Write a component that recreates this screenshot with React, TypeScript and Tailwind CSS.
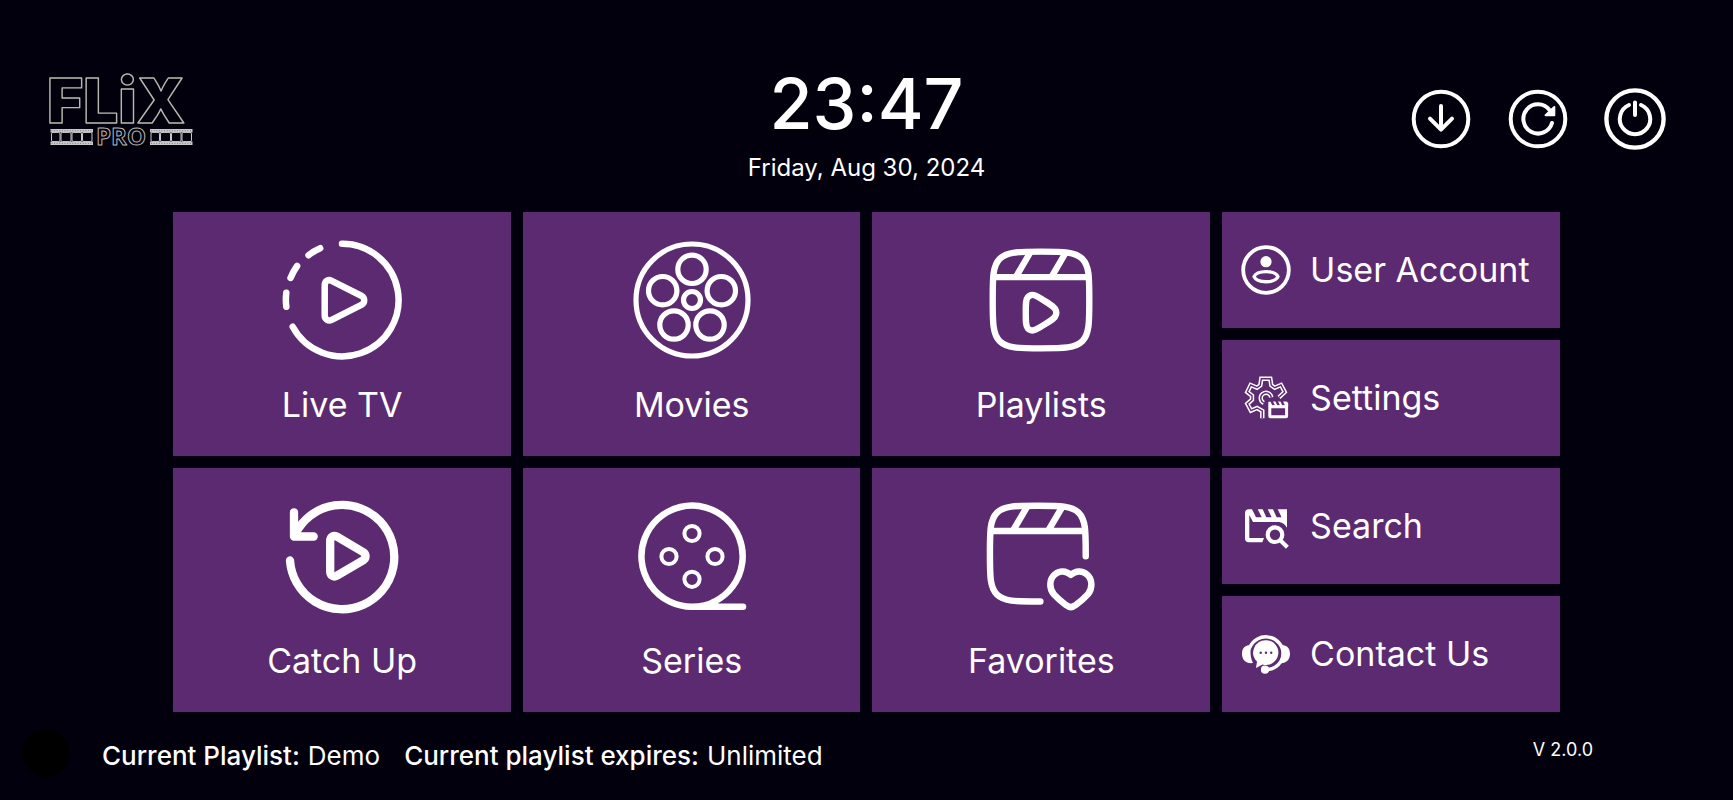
import type { ReactNode } from "react";

interface IconProps {
  children: ReactNode;
  viewBox?: string;
  className: string;
  strokeWidth?: number;
}

function Icon({ children, viewBox = "0 0 120 120", className, strokeWidth = 6.5 }: IconProps) {
  return (
    <svg
      viewBox={viewBox}
      className={`shrink-0 overflow-visible ${className}`}
      fill="none"
      stroke="currentColor"
      strokeWidth={strokeWidth}
      strokeLinecap="round"
      strokeLinejoin="round"
      aria-hidden="true"
    >
      {children}
    </svg>
  );
}

const BIG = "w-[120px] h-[120px]";
const SMALL = "w-12 h-12";
const ROUND = "w-16 h-16";

const tiles = [
  {
    label: "Live TV",
    icon: (
      <Icon className={BIG}>
        <path d="M60 3.7A56.3 56.3 0 1 1 10.7 86.7" />
        <path d="M38.2 8.2A56.3 56.3 0 0 0 26.5 15.2M15.1 26A56.3 56.3 0 0 0 8.5 38M4.3 52.7A56.3 56.3 0 0 0 4.3 66.7" />
        <path d="M42.7 45.3C42.7 41.2 46.2 39 49.7 40.8L79.8 56C83 57.8 83 62.8 79.8 64.6L49.7 79.8C46.2 81.6 42.7 79.4 42.7 75.3Z" />
      </Icon>
    ),
  },
  {
    label: "Movies",
    icon: (
      <Icon className={BIG} strokeWidth={5.2}>
        <circle cx="60" cy="60" r="56" />
        <circle cx="60" cy="60" r="8.5" />
        <circle cx="60" cy="29.3" r="14.2" />
        <circle cx="30.7" cy="50.7" r="14.2" />
        <circle cx="89.3" cy="50.7" r="14.2" />
        <circle cx="42" cy="85" r="14.2" />
        <circle cx="78" cy="85" r="14.2" />
      </Icon>
    ),
  },
  {
    label: "Playlists",
    icon: (
      <Icon className={BIG} viewBox="0.2 0.2 23.6 23.6" strokeWidth={1.25}>
        <path d="M2.5 12C2.5 7.52 2.5 5.28 3.89 3.89C5.28 2.5 7.52 2.5 12 2.5C16.48 2.5 18.72 2.5 20.11 3.89C21.5 5.28 21.5 7.52 21.5 12C21.5 16.48 21.5 18.72 20.11 20.11C18.72 21.5 16.48 21.5 12 21.5C7.52 21.5 5.28 21.5 3.89 20.11C2.5 18.72 2.5 16.48 2.5 12Z" />
        <path d="M2.6 7.5H21.4M9.8 2.8L7.1 7.4M16.8 2.8L14.1 7.4" strokeLinecap="butt" />
        <path d="M14.95 14.89C14.8 15.52 14.09 15.96 12.65 16.85C11.27 17.71 10.58 18.13 10.02 17.96C9.79 17.89 9.58 17.76 9.41 17.57C9 17.12 9 16.25 9 14.5C9 12.75 9 11.88 9.41 11.43C9.58 11.24 9.79 11.11 10.02 11.04C10.58 10.87 11.27 11.29 12.65 12.15C14.09 13.04 14.8 13.48 14.95 14.11C15.02 14.36 15.02 14.64 14.95 14.89Z" />
      </Icon>
    ),
  },
  {
    label: "Catch Up",
    icon: (
      <Icon className={BIG} strokeWidth={8.3}>
        <path d="M8 64.5A52.2 52.2 0 1 0 13.5 37.5" />
        <path d="M12 16.3V40.5H31.7" />
        <path d="M48.2 45.2C48.2 40.7 51.5 38.8 55 40.7L81 56C84.4 58.2 84.4 62.2 81 64.4L55 79.7C51.5 81.6 48.2 79.7 48.2 75.2Z" />
      </Icon>
    ),
  },
  {
    label: "Series",
    icon: (
      <Icon className={BIG} strokeWidth={6.5}>
        <path d="M60 110.8A50.6 50.6 0 1 1 83 105.3C77 109 69 110.8 60 110.8H111" />
        <g strokeWidth="4">
          <circle cx="60" cy="37.5" r="7.6" />
          <circle cx="37" cy="60.5" r="7.6" />
          <circle cx="83" cy="60.5" r="7.6" />
          <circle cx="60" cy="83.3" r="7.6" />
        </g>
      </Icon>
    ),
  },
  {
    label: "Favorites",
    icon: (
      <Icon className={BIG} viewBox="0.73 0.57 23.8 23.8" strokeWidth={1.28}>
        <path d="M12.5 21.5H12C7.52 21.5 5.28 21.5 3.89 20.11C2.5 18.72 2.5 16.48 2.5 12C2.5 7.52 2.5 5.28 3.89 3.89C5.28 2.5 7.52 2.5 12 2.5C16.48 2.5 18.72 2.5 20.11 3.89C21.5 5.28 21.5 7.52 21.5 12V12.5" />
        <path d="M2.6 7.5H21.4M9.8 2.8L7.1 7.4M16.8 2.8L14.1 7.4" strokeLinecap="butt" />
        <path d="M18.55 16.2C17.6 15.35 16.3 15.3 15.4 16.1C14.2 17.1 14.2 18.9 15.2 20.1C15.9 20.9 16.9 21.7 17.6 22.2C18.2 22.7 18.9 22.7 19.5 22.2C20.2 21.7 21.2 20.9 21.9 20.1C22.9 18.9 22.9 17.1 21.7 16.1C20.8 15.3 19.5 15.35 18.55 16.2Z" />
      </Icon>
    ),
  },
];

const gear =
  "M20.3 44.3V37L15 34L9 36.7L5.3 29.7L10 25.7V21.7L5.3 18L8.7 11L15 13.7L18.3 11.3L19.3 4.7H28.3L29.3 11.3L32.7 13.7L39 11L42.7 18L37 23.3";

const links = [
  {
    label: "User Account",
    icon: (
      <Icon className={SMALL} viewBox="0 0 48 48" strokeWidth={3.8}>
        <circle cx="24" cy="24" r="22.8" />
        <circle cx="24" cy="15.7" r="5.6" fill="currentColor" stroke="none" />
        <path d="M12 30.7C15 24 33 24 36 30.7C33 37.4 15 37.4 12 30.7Z" strokeWidth="3.3" />
      </Icon>
    ),
  },
  {
    label: "Settings",
    icon: (
      <Icon className={SMALL} viewBox="0 0 48 48" strokeWidth={4.4}>
        <g strokeLinecap="butt" strokeLinejoin="miter">
          <path d={gear} />
          <path d="M21.8 28.9A5.3 5.3 0 1 1 29.3 23.4" />
          <g stroke="#5c2a70" strokeWidth="1.4">
            <path d={gear} />
            <path d="M21.8 28.9A5.3 5.3 0 1 1 29.3 23.4" />
          </g>
        </g>
        <rect x="27.8" y="32.8" width="16.8" height="10" rx="0.6" strokeWidth="3" />
        <path
          d="M26.3 33V28L28.4 27.6L30.4 31.4H33L31 27.6H33.4L35.4 31.4H38L36 27.6H38.4L40.4 31.4H43L41 27.6H44.6L46.2 29V33Z"
          fill="currentColor"
          stroke="none"
        />
      </Icon>
    ),
  },
  {
    label: "Search",
    icon: (
      <Icon className={SMALL} viewBox="0 0 48 48" strokeWidth={4.2}>
        <path
          d="M6.8 7.3H10L14 15.3H19.7L15.7 7.3H20.7L24.3 15.3H29.6L25.7 7.3H31L34.6 15.3H39.6L35.7 7.3H45V25.7C43 22.5 40.5 20.5 37.5 20H11L7.3 13V36H22L20.3 40.3H6.8A4 4 0 0 1 3 36.3V11.3A4 4 0 0 1 6.8 7.3Z"
          fill="currentColor"
          stroke="none"
        />
        <circle cx="33" cy="32.7" r="7.3" />
        <path d="M38.5 38.5L45.4 45.2" strokeLinecap="butt" />
      </Icon>
    ),
  },
  {
    label: "Contact Us",
    icon: (
      <Icon className={SMALL} viewBox="0 0 48 48" strokeWidth={3.4}>
        <path d="M7.8 17.5A17.4 17.4 0 0 1 41.2 23C41 31.5 34.5 39.3 25 39.5" />
        <path
          d="M9.5 15C3 14.5 0 18.3 0 24C0 29.7 4 34 11 33C8.2 27.5 7.8 20.5 9.5 15ZM38.5 15C45 14.5 48 18.3 48 24C48 29.7 44 34 37 33C39.8 27.5 40.2 20.5 38.5 15Z"
          fill="currentColor"
          stroke="none"
        />
        <path
          d="M24 10.2A12.4 12.4 0 1 1 20.5 34.5L14 38L15 31.5A12.4 12.4 0 0 1 24 10.2Z"
          fill="currentColor"
          stroke="none"
        />
        <circle cx="23" cy="39.7" r="4.1" fill="currentColor" stroke="none" />
        <g fill="#5c2a70" stroke="none">
          <circle cx="18.7" cy="22.7" r="1.2" />
          <circle cx="24" cy="22.7" r="1.2" />
          <circle cx="29.2" cy="22.7" r="1.2" />
        </g>
      </Icon>
    ),
  },
];

const actions = [
  {
    label: "Download",
    icon: (
      <Icon className={ROUND} viewBox="0 0 64 64" strokeWidth={4}>
        <circle cx="32" cy="32" r="27.3" />
        <path d="M32 19V42.5M21 31.7L32 42.7L43 31.7" />
      </Icon>
    ),
  },
  {
    label: "Refresh",
    icon: (
      <Icon className={ROUND} viewBox="0 0 64 64" strokeWidth={4}>
        <circle cx="32" cy="32" r="27.3" />
        <path d="M46 36A14.6 14.6 0 1 1 43.5 23" />
        <path d="M48.3 20V28.3H39.6Z" fill="currentColor" strokeWidth="2" />
      </Icon>
    ),
  },
  {
    label: "Power",
    icon: (
      <Icon className={ROUND} viewBox="0 0 64 64" strokeWidth={4}>
        <circle cx="32" cy="32" r="28.6" strokeWidth="4.4" />
        <path d="M26 18A15.2 15.2 0 1 0 38 18M32 15.5V28" />
      </Icon>
    ),
  },
];

function FilmStrip({ x }: { x: number }) {
  return (
    <g transform={`translate(${x} 54)`} fill="none" stroke="#c9c9cc">
      <path d="M0 1.7H42.5M0 14.3H42.5" strokeWidth="3.4" />
      <path d="M1 1.7H42.5M1 14.3H42.5" stroke="#77767e" strokeWidth="1" strokeDasharray="1 1.6" />
      <rect x="1" y="3.4" width="8.5" height="9.2" rx="1.5" />
      <rect x="10.5" y="3.4" width="10" height="9.2" rx="1.5" />
      <rect x="21.5" y="3.4" width="9.5" height="9.2" rx="1.5" />
      <rect x="32" y="3.4" width="9.5" height="9.2" rx="1.5" />
    </g>
  );
}

function Logo() {
  return (
    <svg
      viewBox="0 0 144 88"
      className="w-36 h-[88px] overflow-visible"
      fill="none"
      stroke="#b9b8b0"
      strokeLinejoin="round"
      role="img"
      aria-label="Flix Pro"
    >
      <text x="-3" y="48" className="font-['Inter'] font-black" fontSize="62" strokeWidth="1.4">
        FLiX
      </text>
      <FilmStrip x={0.5} />
      <FilmStrip x={100} />
      <text x="71" y="70" textAnchor="middle" className="font-['Open_Sans'] font-bold" fontSize="24" strokeWidth="1">
        PRO
      </text>
    </svg>
  );
}

export default function App() {
  return (
    <div className="min-h-screen flex flex-col bg-[#02000d] text-white font-['Inter',sans-serif]">
      <header className="grid grid-cols-[1fr_auto_1fr] items-start pt-[63px] pb-[27px] pl-[50px] pr-[66px]">
        <div className="mt-3">
          <Logo />
        </div>
        <div className="text-center whitespace-nowrap pl-4">
          <div className="text-[70px] leading-[82px] font-medium">23:47</div>
          <div className="mt-1.5 text-2xl leading-[34px]">Friday, Aug 30, 2024</div>
        </div>
        <div className="mt-6 flex justify-end gap-[33px]">
          {actions.map((a) => (
            <button key={a.label} aria-label={a.label}>
              {a.icon}
            </button>
          ))}
        </div>
      </header>

      <main className="flex-1 grid grid-cols-4 gap-3 px-[10%]">
        <div className="col-span-3 grid grid-cols-3 grid-rows-2 gap-3">
          {tiles.map((t) => (
            <button key={t.label} className="flex flex-col items-center pt-7 pb-6 bg-[#5c2a70]">
              {t.icon}
              <span className="mt-5 text-[34px] leading-[50px]">{t.label}</span>
            </button>
          ))}
        </div>
        <div className="grid grid-rows-4 gap-3">
          {links.map((l) => (
            <button key={l.label} className="flex items-center gap-5 px-5 bg-[#5c2a70] whitespace-nowrap">
              {l.icon}
              <span className="text-[34px] leading-[50px]">{l.label}</span>
            </button>
          ))}
        </div>
      </main>

      <footer className="h-[88px] flex items-start pl-[22px] pr-[140px] pt-[17px]">
        <span className="w-12 h-12 rounded-full bg-black" />
        <div className="ml-8 flex text-[26px] leading-[54px] whitespace-nowrap">
          <span className="font-medium">Current Playlist:</span>
          <span className="ml-2">Demo</span>
          <span className="ml-6 font-medium">Current playlist expires:</span>
          <span className="ml-2">Unlimited</span>
        </div>
        <span className="ml-auto text-lg leading-[42px]">V 2.0.0</span>
      </footer>
    </div>
  );
}
